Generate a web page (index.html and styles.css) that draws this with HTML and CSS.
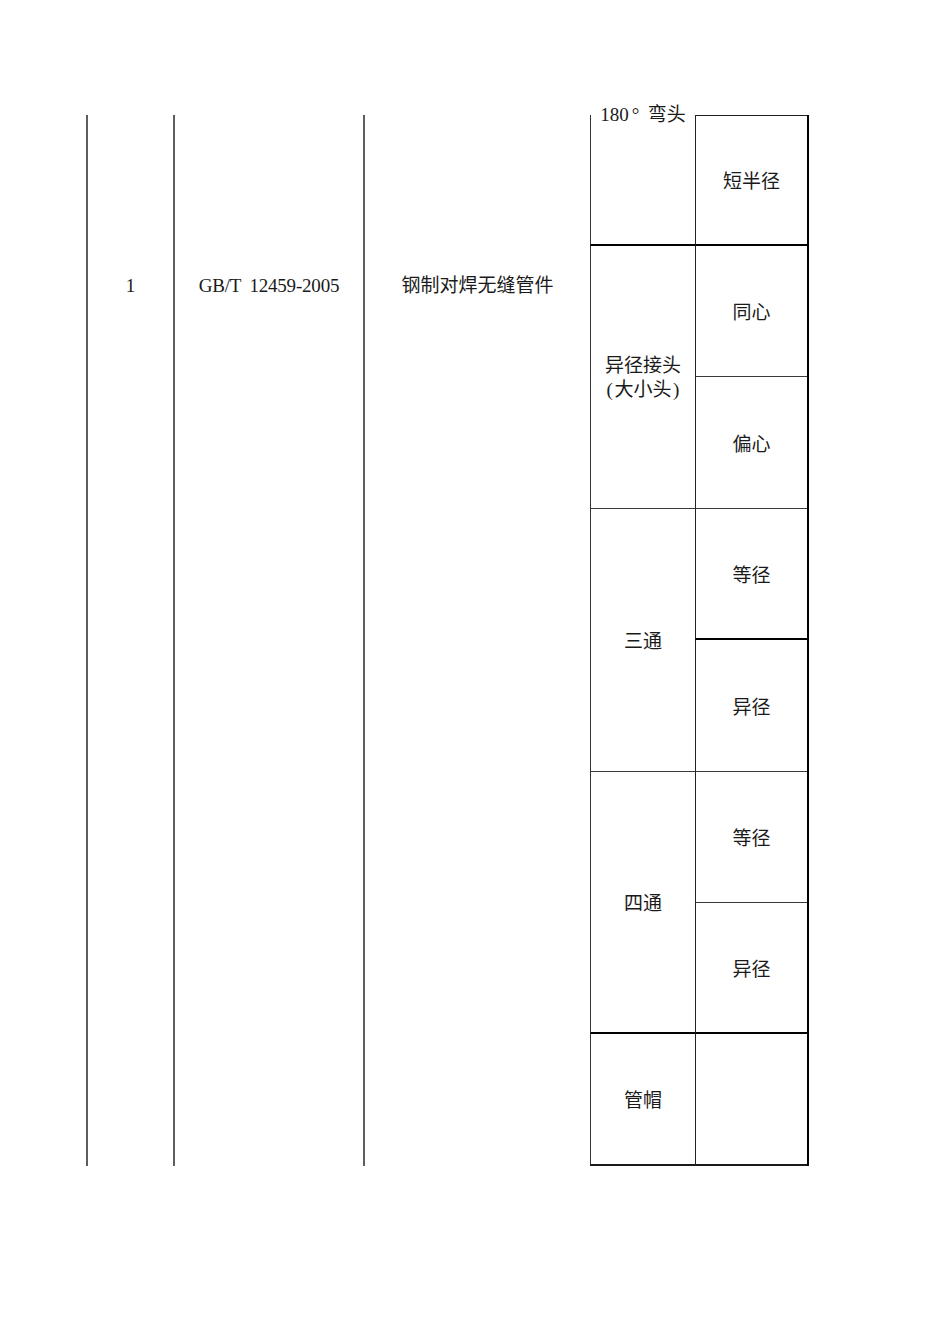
FILE: index.html
```html
<!DOCTYPE html>
<html lang="zh-CN">
<head>
<meta charset="utf-8">
<title>钢制对焊无缝管件</title>
<link rel="stylesheet" href="styles.css">
</head>
<body>
<div class="sheet">
  <div class="col c-no"><span class="lat">1</span></div>
  <div class="col c-std"><span class="lat code">GB/T 12459-2005</span></div>
  <div class="col c-name">钢制对焊无缝管件</div>
  <div class="grid">
    <div class="cell a r1 top-text"><span class="top-line"><span class="lat">180</span><span class="deg">°</span>弯头</span></div>
    <div class="cell b r1 first thick">短半径</div>

    <div class="cell a r2s thin"><span class="two-line">异径接头<br><span class="paren">(</span>大小头<span class="paren">)</span></span></div>
    <div class="cell b r2 thin">同心</div>
    <div class="cell b r3 thin">偏心</div>

    <div class="cell a r4s thin">三通</div>
    <div class="cell b r4 thick">等径</div>
    <div class="cell b r5 thin">异径</div>

    <div class="cell a r6s thick">四通</div>
    <div class="cell b r6 thin">等径</div>
    <div class="cell b r7 thick">异径</div>

    <div class="cell a r8 last">管帽</div>
    <div class="cell b r8 last"></div>
  </div>
</div>
</body>
</html>
```

FILE: styles.css
```css
html, body {
  margin: 0;
  padding: 0;
  background: #ffffff;
}

body {
  font-family: "Noto Sans CJK SC", "Noto Sans", sans-serif;
  font-size: 19px;
  line-height: 24px;
  color: #1a1a1a;
}

.lat {
  font-family: "Liberation Serif", "DejaVu Serif", serif;
  font-size: 19px;
}

.code {
  word-spacing: 4px;
  letter-spacing: -0.2px;
}

.deg {
  font-family: "Liberation Serif", serif;
  display: inline-block;
  width: 19px;
  text-align: left;
  padding-left: 3px;
  box-sizing: border-box;
}

.paren {
  font-family: "Liberation Serif", serif;
  display: inline-block;
  width: 9.5px;
  text-align: center;
}

.sheet {
  display: flex;
  margin-left: 86px;
  margin-top: 115px;
  height: 1051px;
}

.col {
  box-sizing: border-box;
  height: 1051px;
  border-left: 2px solid #5e5e5e;
  padding-top: 157px;
  text-align: center;
  white-space: nowrap;
}

.c-no { width: 87px; }
.c-std { width: 190px; }
.c-name { width: 227px; }

.grid {
  display: grid;
  grid-template-columns: 105px 112px;
  grid-template-rows: 131px 131px 132px 131px 132px 131px 131px 132px;
  border-right: 2px solid #000000;
  height: 1051px;
}

.cell {
  box-sizing: border-box;
  display: flex;
  align-items: center;
  justify-content: center;
  text-align: center;
  white-space: nowrap;
}

.a { grid-column: 1; border-left: 1px solid #333333; }
.b { grid-column: 2; border-left: 1px solid #222222; }

.r1 { grid-row: 1; }
.r2 { grid-row: 2; }
.r3 { grid-row: 3; }
.r4 { grid-row: 4; }
.r5 { grid-row: 5; }
.r6 { grid-row: 6; }
.r7 { grid-row: 7; }
.r8 { grid-row: 8; }
.r2s { grid-row: 2 / span 2; }
.r4s { grid-row: 4 / span 2; }
.r6s { grid-row: 6 / span 2; }

.first { border-top: 1px solid #222222; }
.thin { border-bottom: 1px solid #3a3a3a; }
.thick { border-bottom: 2px solid #000000; }
.last { border-bottom: 2px solid #1a1a1a; }

.a.r1 {
  border-bottom: 2px solid #000000;
}

.top-text {
  align-items: flex-start;
}

.top-line {
  display: block;
  margin-top: -14px;
  background: #ffffff;
  line-height: 24px;
}

.two-line {
  display: block;
  line-height: 24px;
}
```
